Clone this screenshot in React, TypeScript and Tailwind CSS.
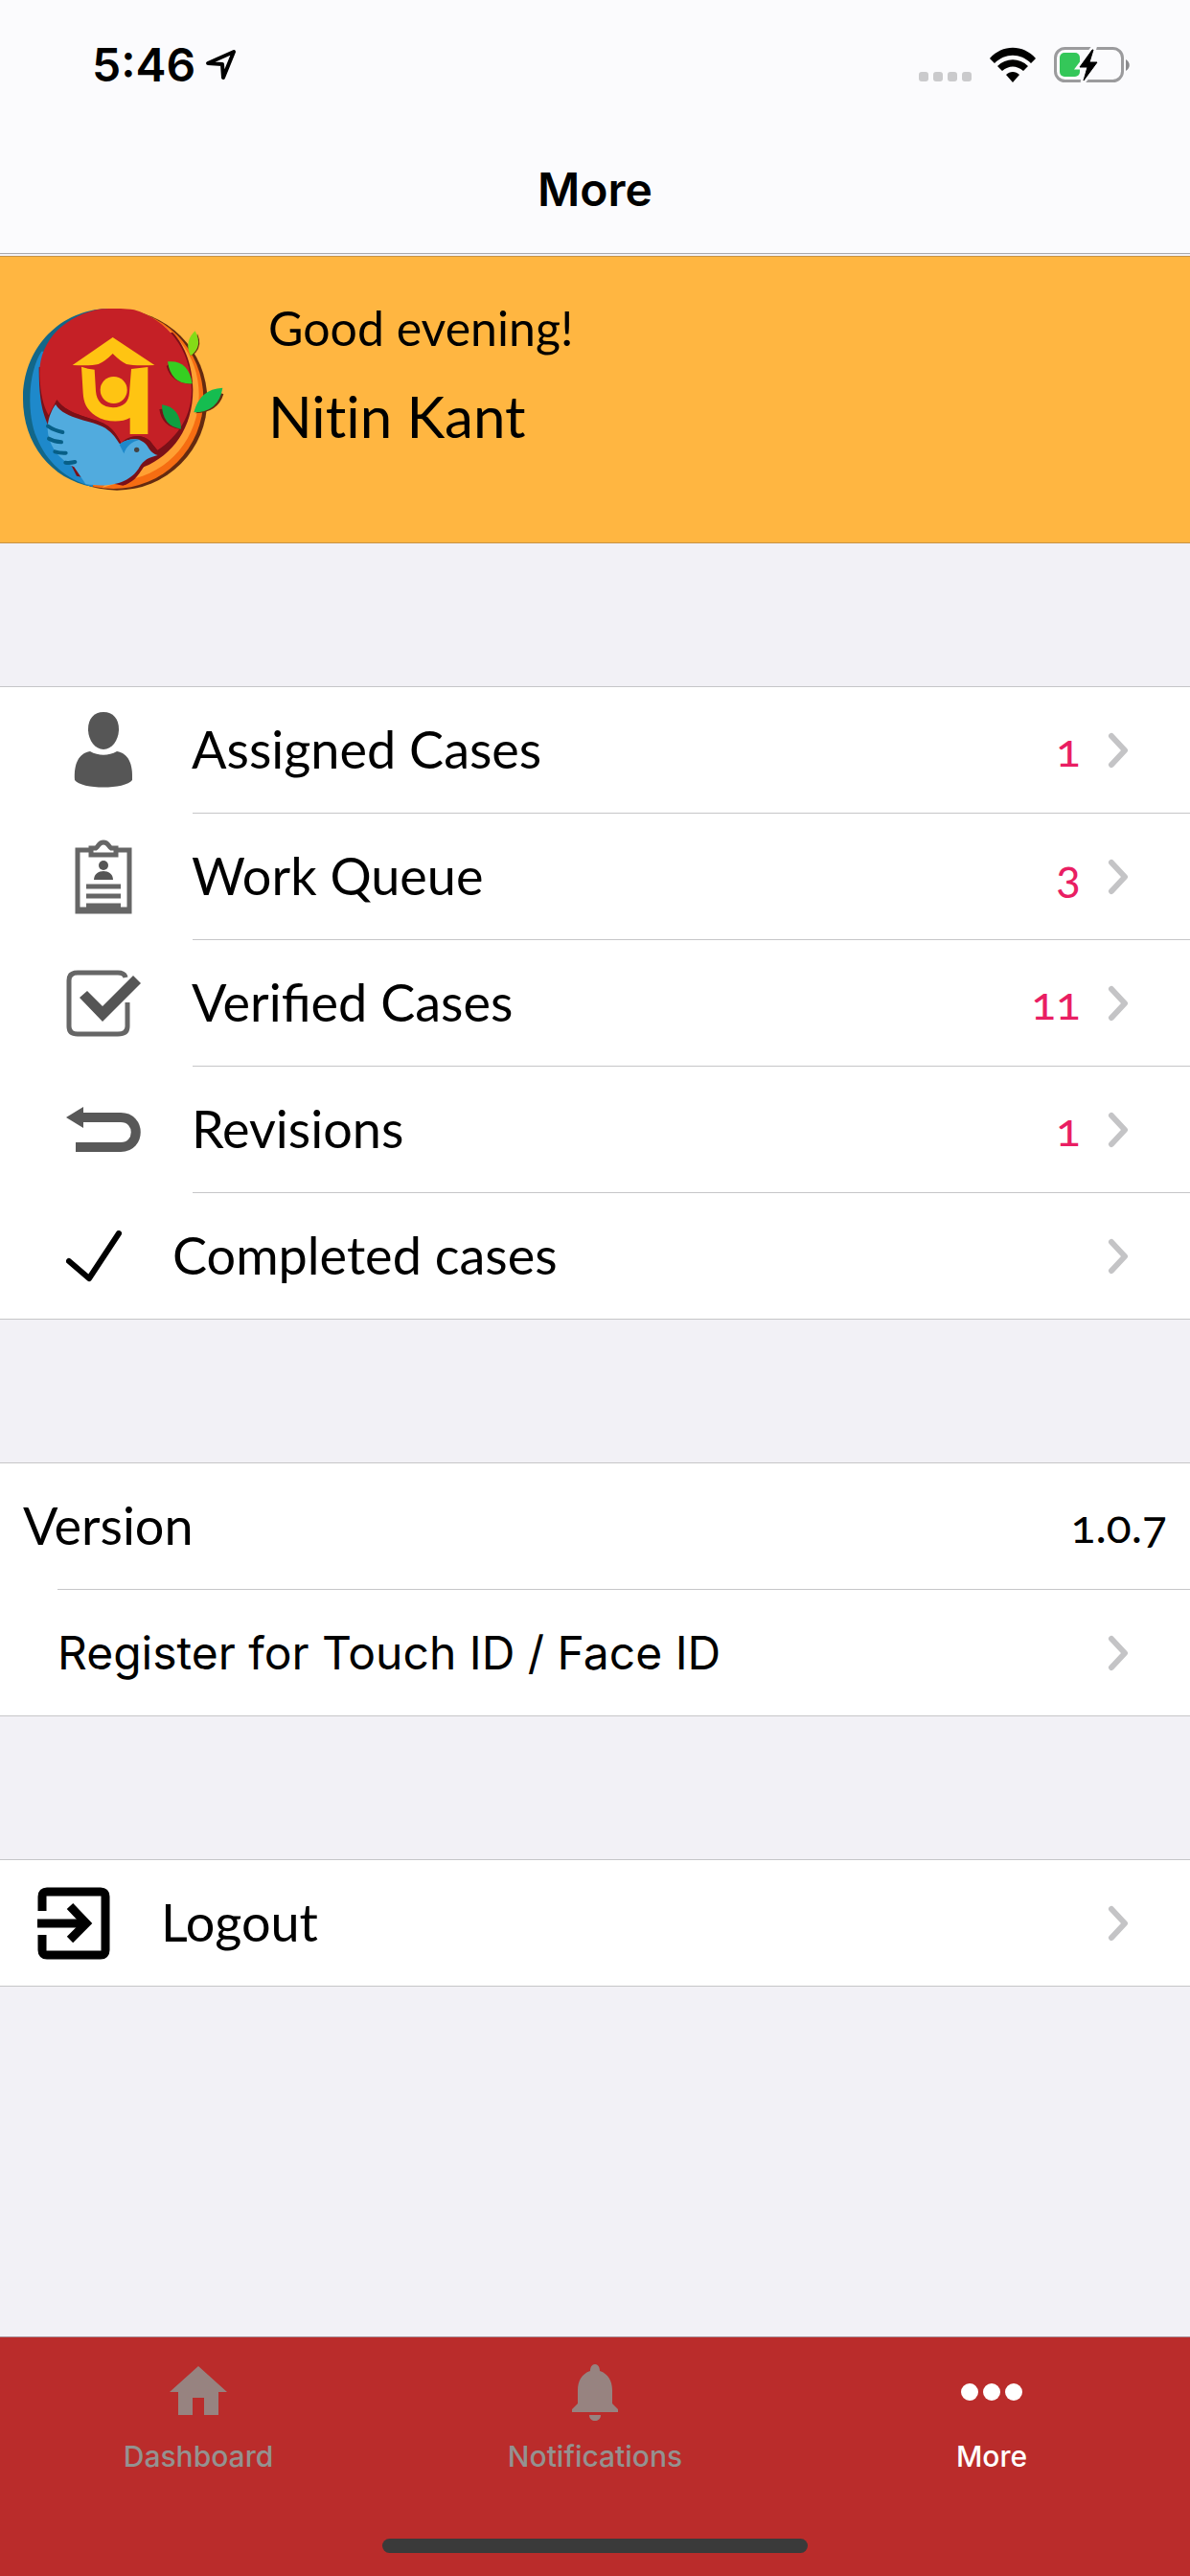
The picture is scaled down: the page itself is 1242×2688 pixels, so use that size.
import type { ReactNode } from 'react';

interface MenuRowProps {
  icon?: ReactNode;
  label: string;
  count?: number;
}

function Chevron() {
  return (
    <svg className="h-[38px] w-[22px] shrink-0" viewBox="0 0 22 38" fill="none">
      <path d="M4 4l14 15L4 34" stroke="#c4c4c6" strokeWidth="6" strokeLinecap="round" strokeLinejoin="round" />
    </svg>
  );
}

function MenuRow({ icon, label, count }: MenuRowProps) {
  return (
    <button type="button" className="flex h-[131px] w-full items-center pl-[69px] pr-16 text-left">
      {icon}
      <span className="ml-[53px] flex-1 pb-[2px] font-[Lato,sans-serif] text-[54px] leading-[64px]">{label}</span>
      {count !== undefined && (
        <span className="mr-7 pb-[2px] font-[Lato,sans-serif] text-[48px] leading-[64px] text-[#e91e63] oldstyle-nums">
          {count}
        </span>
      )}
      <Chevron />
    </button>
  );
}

function Divider({ className }: { className: string }) {
  return <hr className={`border-[#c6c6c8] ${className}`} />;
}

function Logo() {
  return (
    <svg className="h-[190px] w-[210px] shrink-0" viewBox="72 66 630 570">
      <circle cx="366" cy="352" r="283" fill="#642a10" />
      <circle cx="355" cy="348" r="282" fill="#f66d12" />
      <path d="M420 74C540 110 623 210 623 335C623 470 530 580 400 602L320 627L440 500Z" fill="#ffa033" />
      <path d="M322 67C180 78 72 195 72 348C72 490 160 600 290 624L300 300L380 67Z" fill="#126789" />
      <path d="M130 200C85 270 85 400 115 470C145 545 205 600 290 624L300 420L210 200Z" fill="#1e89cb" />
      <path d="M122 250C122 340 130 390 155 440L310 560L390 618C410 610 430 590 450 562C540 525 604 440 604 320C604 250 580 180 540 140Z" fill="#7b1018" />
      <path d="M318 67C210 85 124 160 124 270C126 335 136 370 152 400L178 352C215 405 300 405 340 435C360 450 370 470 380 488C400 465 445 455 470 480L492 510C560 465 600 400 600 320C600 190 520 100 420 70C390 65 350 65 318 67Z" fill="#c52026" />
      <path d="M178 352C215 405 300 405 340 435C360 450 370 470 380 488C400 462 445 456 470 482L494 510L500 525L450 560C430 595 415 610 385 620L240 590L150 410Z" fill="#7b1018" />
      <path d="M174 366C205 415 290 415 330 440C355 457 365 475 375 490C410 466 445 472 462 497C470 512 480 520 494 525C465 532 450 540 436 563C418 595 370 632 268 615L232 562C180 535 150 490 149 440C149 415 160 385 174 366Z" fill="#51abde" />
      <path d="M374 492C385 478 410 473 438 476C412 482 395 497 388 520Z" fill="#1e89cb" />
      <circle cx="428" cy="508" r="8" fill="#444" />
      <path d="M150 434Q170 448 196 453M153 473Q170 483 192 484M172 514Q188 519 206 518M205 548Q220 550 235 546" stroke="#075f87" strokeWidth="12" strokeLinecap="round" fill="none" />
      <path d="M353 156L484 243Q420 246 396 240Q378 232 353 207Q328 232 308 240Q286 246 227 243Z" fill="#ffc412" />
      <path d="M255 248Q275 255 296 257L300 325Q304 374 354 376Q402 374 405 330L411 255L463 249V459H407V408C380 424 330 422 300 402C270 382 262 360 260 330Z" fill="#ffc412" />
      <circle cx="356" cy="321" r="42" fill="#ffc412" />
      <g fill="#642a10">
        <path d="M618 145Q634 180 612 205L596 214Z" />
        <path d="M700 334Q682 392 612 394L690 330Z" />
      </g>
      <path d="M521 246Q535 300 600 302L530 240ZM499 381Q506 435 562 443L510 380Z" fill="#7b1018" />
      <path d="M611 136Q575 170 597 214Q637 185 611 136Z" fill="#84db17" />
      <path d="M525 232Q590 225 602 301Q535 305 525 232Z" fill="#35cf21" />
      <path d="M697 314Q625 318 607 391Q685 390 697 314Z" fill="#15bd50" />
      <path d="M507 367Q565 375 567 443Q508 435 507 367Z" fill="#0f9f40" />
    </svg>
  );
}

function PersonIcon() {
  return (
    <svg className="h-[82px] w-[78px] shrink-0" viewBox="0 0 78 82" fill="#565656">
      <path d="M39 1C49 1 55 8 55 19C55 30 48 40 39 40C30 40 23 30 23 19C23 8 29 1 39 1Z" />
      <path d="M25 42C34 47 44 47 53 42C65 44 70 55 69 72C62 82 16 82 9 72C8 55 13 44 25 42Z" />
    </svg>
  );
}

function ClipboardIcon() {
  return (
    <svg className="h-[80px] w-[78px] shrink-0" viewBox="0 0 78 80" fill="none" stroke="#666" strokeWidth="5">
      <path d="M24 12H12V76H66V12H54" />
      <path d="M26 17V10H31C34 8 34 4 39 4C44 4 44 8 47 10H52V17Z" />
      <path d="M21 50H57M21 60H57M21 70H57M12 74H66" />
      <circle cx="39" cy="28" r="5" fill="#555" stroke="none" />
      <path d="M29 43C29 37 34 34 39 34C44 34 49 37 49 43Z" fill="#555" stroke="none" />
    </svg>
  );
}

function VerifiedIcon() {
  return (
    <svg className="h-[72px] w-[78px] shrink-0" viewBox="0 0 78 72" fill="none">
      <path d="M62 9Q61 4 54 4H12Q3 4 3 12V60Q3 68 12 68H54Q64 68 64 60V35" stroke="#666" strokeWidth="5" />
      <path d="M14 30L22 23L38 39L70 7L78 15L38 55Z" fill="#555" />
    </svg>
  );
}

function RevisionsIcon() {
  return (
    <svg className="h-[48px] w-[78px] shrink-0" viewBox="0 0 78 48" fill="none">
      <path d="M14 11H57C78 11 78 42 57 42H10" stroke="#585858" strokeWidth="10" />
      <path d="M0 11L18 0V22Z" fill="#585858" />
    </svg>
  );
}

function CheckIcon() {
  return (
    <svg className="h-[54px] w-[58px] shrink-0" viewBox="0 0 58 54" fill="none">
      <path d="M3 32L24 50L55 3" stroke="#000" strokeWidth="6" strokeLinecap="round" strokeLinejoin="round" />
    </svg>
  );
}

function LogoutIcon() {
  return (
    <svg className="h-[76px] w-[76px] shrink-0" viewBox="0 0 76 76" fill="none" stroke="#000">
      <path d="M5 25V10Q5 5 10 5H66Q71 5 71 10V66Q71 71 66 71H10Q5 71 5 66V50" strokeWidth="9" />
      <path d="M0 38H50" strokeWidth="9" />
      <path d="M34 20L51 38L34 55" strokeWidth="9" />
    </svg>
  );
}

function StatusBar() {
  return (
    <div className="flex h-[136px] items-center pl-24 pr-[62px]">
      <span className="text-[48px] font-semibold leading-[56px]">5:46</span>
      <svg className="ml-[10px] h-[34px] w-[34px]" viewBox="0 0 34 34" fill="none">
        <path d="M3 15L30 3L19 30L18 16Z" stroke="#000" strokeWidth="4" strokeLinejoin="round" />
      </svg>
      <div className="ml-auto flex items-center">
        <div className="mr-[18px] mt-[24px] flex gap-[5px]">
          {[0, 1, 2, 3].map((dot) => (
            <span key={dot} className="size-[10px] rounded-[3px] bg-[#cacacc]" />
          ))}
        </div>
        <svg className="mr-[18px] h-[38px] w-[50px]" viewBox="0 0 50 38">
          <path d="M1 12C14-3 36-3 49 12L44 17C33 6 17 6 6 17Z" />
          <path d="M9 20C18 11 32 11 41 20L36 25C29 19 21 19 14 25Z" />
          <path d="M18 29C22 25 28 25 32 29L25 37Z" />
        </svg>
        <svg className="h-[38px] w-[80px]" viewBox="0 0 80 38" fill="none">
          <rect x="1.5" y="1.5" width="70" height="34" rx="10" stroke="#9b9b9d" strokeWidth="3" />
          <path d="M75 13C80 16 80 22 75 25Z" fill="#8b8b8d" />
          <rect x="6" y="6" width="21" height="25" rx="5" fill="#34c759" />
          <path d="M41 1L26 21H34L30 37L47 16H38L42 1Z" fill="#fbfbfd" stroke="#fbfbfd" strokeWidth="5" />
          <path d="M40 3L27 21H35L31 35L45 16H37L41 3Z" fill="#000" stroke="#000" />
        </svg>
      </div>
    </div>
  );
}

const tabs = [
  {
    label: 'Dashboard',
    active: false,
    icon: (
      <path d="M32 4L62 31H53V55H38V37H26V55H11V31H2Z" fill="#978380" />
    ),
  },
  {
    label: 'Notifications',
    active: false,
    icon: (
      <path
        d="M32 2C35 2 37 5 37 9C46 12 50 20 50 29V43L56 49V52H8V49L14 43V29C14 20 18 12 27 9C27 5 29 2 32 2ZM26 55H38C38 63 26 63 26 55Z"
        fill="#978380"
      />
    ),
  },
  {
    label: 'More',
    active: true,
    icon: (
      <g fill="#fff">
        <circle cx="9" cy="31" r="9" />
        <circle cx="32" cy="31" r="9" />
        <circle cx="55" cy="31" r="9" />
      </g>
    ),
  },
];

export default function App() {
  return (
    <div className="flex min-h-screen flex-col bg-[#f2f1f6] font-[Inter,sans-serif] text-black">
      {/* Navigation bar */}
      <header className="border-b border-[#a9a9ad] bg-[#fbfbfd]">
        <StatusBar />
        <h1 className="h-[128px] pt-8 text-center text-[48px] font-semibold leading-[60px]">More</h1>
      </header>

      <main className="pb-24">
        {/* Greeting */}
        <section className="mt-[2px] flex h-[300px] border-y border-[#c79245] bg-[#ffb641] pl-6 pt-[54px] font-[Lato,sans-serif]">
          <Logo />
          <div className="-mt-3 ml-[46px]">
            <p className="text-[50px] leading-[64px]">Good evening!</p>
            <p className="mt-5 text-[60px] leading-[80px] [font-variant-ligatures:none]">Nitin Kant</p>
          </div>
        </section>

        {/* Cases */}
        <section className="mt-[149px] border-y border-[#c6c6c8] bg-white">
          <MenuRow icon={<PersonIcon />} label="Assigned Cases" count={1} />
          <Divider className="ml-[201px]" />
          <MenuRow icon={<ClipboardIcon />} label="Work Queue" count={3} />
          <Divider className="ml-[201px]" />
          <MenuRow icon={<VerifiedIcon />} label="Verified Cases" count={11} />
          <Divider className="ml-[201px]" />
          <MenuRow icon={<RevisionsIcon />} label="Revisions" count={1} />
          <Divider className="ml-[201px]" />
          <MenuRow icon={<CheckIcon />} label="Completed cases" />
        </section>

        {/* App settings */}
        <section className="mt-[149px] border-y border-[#c6c6c8] bg-white">
          <div className="flex h-[131px] items-center justify-between px-6 pb-[2px] font-[Lato,sans-serif] leading-[64px]">
            <span className="text-[54px]">Version</span>
            <span className="text-[48px] oldstyle-nums">1.0.7</span>
          </div>
          <Divider className="ml-[60px]" />
          <button type="button" className="flex h-[131px] w-full items-center pl-[60px] pr-16 text-left">
            <span className="flex-1 text-[48px] leading-[64px]">Register for Touch ID / Face ID</span>
            <Chevron />
          </button>
        </section>

        <section className="mt-[149px] border-y border-[#c6c6c8] bg-white">
          <button type="button" className="flex h-[131px] w-full items-center pl-[39px] pr-16 text-left">
            <LogoutIcon />
            <span className="ml-[53px] flex-1 pb-[2px] font-[Lato,sans-serif] text-[54px] leading-[64px]">Logout</span>
            <Chevron />
          </button>
        </section>
      </main>

      {/* Tab bar */}
      <nav className="mt-auto border-t border-[#a98f98] bg-[#ba2c2b]">
        <div className="grid h-[210px] grid-cols-3 pt-[26px]">
          {tabs.map((tab) => (
            <button
              key={tab.label}
              type="button"
              className={`flex flex-col items-center text-[30px] font-medium leading-[36px] ${
                tab.active ? 'text-white' : 'text-[#949290]'
              }`}
            >
              <svg className="mb-4 h-[64px] w-[64px]" viewBox="0 0 64 64">
                {tab.icon}
              </svg>
              {tab.label}
            </button>
          ))}
        </div>
        <div className="mx-auto mb-6 h-[15px] w-[444px] rounded-full bg-[#3a3a3a]" />
      </nav>
    </div>
  );
}
